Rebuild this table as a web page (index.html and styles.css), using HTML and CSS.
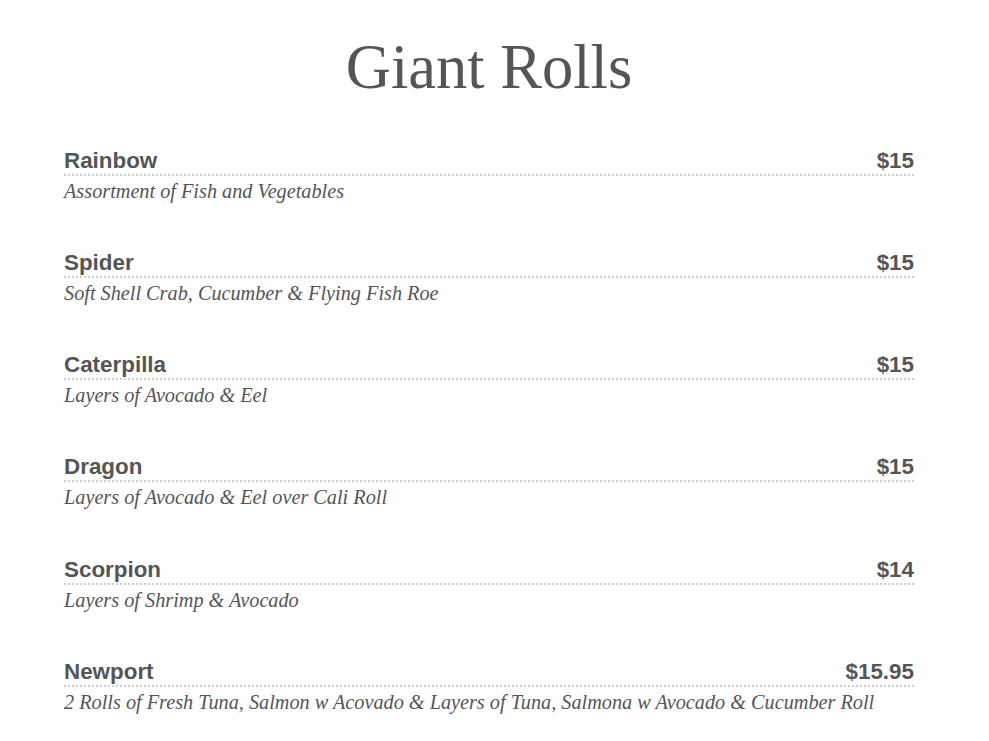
FILE: index.html
```html
<!DOCTYPE html>
<html>
<head>
<meta charset="utf-8">
<link rel="stylesheet" href="styles.css">
</head>
<body>
<div class="menu">
  <h1 class="title">Giant Rolls</h1>
  <div class="item">
    <div class="head"><span class="name">Rainbow</span><span class="price">$15</span></div>
    <div class="desc">Assortment of Fish and Vegetables</div>
  </div>
  <div class="item">
    <div class="head"><span class="name">Spider</span><span class="price">$15</span></div>
    <div class="desc">Soft Shell Crab, Cucumber &amp; Flying Fish Roe</div>
  </div>
  <div class="item">
    <div class="head"><span class="name">Caterpilla</span><span class="price">$15</span></div>
    <div class="desc">Layers of Avocado &amp; Eel</div>
  </div>
  <div class="item">
    <div class="head"><span class="name">Dragon</span><span class="price">$15</span></div>
    <div class="desc">Layers of Avocado &amp; Eel over Cali Roll</div>
  </div>
  <div class="item">
    <div class="head"><span class="name">Scorpion</span><span class="price">$14</span></div>
    <div class="desc">Layers of Shrimp &amp; Avocado</div>
  </div>
  <div class="item">
    <div class="head"><span class="name">Newport</span><span class="price">$15.95</span></div>
    <div class="desc">2 Rolls of Fresh Tuna, Salmon w Acovado &amp; Layers of Tuna, Salmona w Avocado &amp; Cucumber Roll</div>
  </div>
</div>
</body>
</html>
```
FILE: styles.css
```css
html, body {
  margin: 0;
  padding: 0;
  background: #fff;
}
.menu {
  width: 850px;
  margin-left: 64px;
  color: #555;
}
.title {
  margin: 0;
  padding-top: 27px;
  height: 120px;
  box-sizing: border-box;
  text-align: center;
  font-family: "Liberation Serif", serif;
  font-weight: normal;
  font-size: 62.5px;
  line-height: 80px;
  color: #555;
}
.item {
  height: 102.2px;
  padding-top: 27.8px;
  box-sizing: border-box;
}
.head {
  display: flex;
  justify-content: space-between;
  align-items: baseline;
  padding-bottom: 1px;
  border-bottom: 2px dotted #cdcdcd;
  font-family: "Liberation Sans", sans-serif;
  font-weight: bold;
  font-size: 22.4px;
  line-height: 25px;
  color: #555;
}
.desc {
  font-family: "Liberation Serif", serif;
  font-style: italic;
  font-size: 20.25px;
  line-height: 30px;
  color: #555;
}
```
